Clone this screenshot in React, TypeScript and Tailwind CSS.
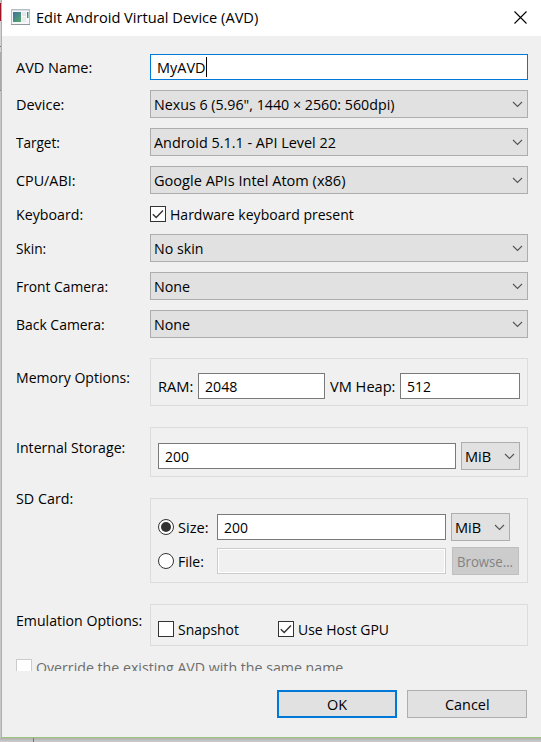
import { useLayoutEffect, useRef, useState, type ReactNode } from "react";
import clsx from "clsx";

/** Single-line caption squeezed or stretched horizontally to a given width. */
function T({ children, w, className }: { children: string; w: number; className?: string }) {
  const ref = useRef<HTMLSpanElement>(null);
  const [scale, setScale] = useState(1);
  useLayoutEffect(() => {
    if (ref.current) setScale((w - 0.8) / ref.current.offsetWidth);
  }, [w, children]);
  return (
    <span className={clsx("block h-5 shrink-0 whitespace-nowrap leading-5", className)} style={{ width: w }}>
      <span ref={ref} className="inline-block origin-left" style={{ transform: `scaleX(${scale})` }}>
        {children}
      </span>
    </span>
  );
}

function Chevron() {
  return (
    <svg width="11" height="7" viewBox="0 0 11 7" className="shrink-0" fill="none" stroke="#555" strokeWidth="1.1">
      <path d="M1 1 L5.5 5.5 L10 1" />
    </svg>
  );
}

function Combo({ text, w, className }: { text: string; w: number; className?: string }) {
  return (
    <div className={clsx("flex h-7 shrink-0 items-center justify-between border border-[#adadad] bg-[#e1e1e1] pr-1 pl-[3px]", className)}>
      <T w={w}>{text}</T>
      <Chevron />
    </div>
  );
}

function Input({ text, w, className }: { text: string; w: number; className?: string }) {
  return (
    <div className={clsx("flex h-[26px] shrink-0 items-center border border-[#7a7a7a] bg-white pl-1.5", className)}>
      <T w={w}>{text}</T>
    </div>
  );
}

function Check({ on, muted }: { on?: boolean; muted?: boolean }) {
  return (
    <span className={clsx("block size-4 shrink-0 border bg-white", muted ? "border-[#cccccc]" : "border-[#333333]")}>
      {on && (
        <svg width="14" height="14" viewBox="0 0 14 14" fill="none" stroke="#333" strokeWidth="1.4">
          <path d="M1.8 7.2 L5.2 10.5 L12 3.6" />
        </svg>
      )}
    </span>
  );
}

function Radio({ on }: { on?: boolean }) {
  return (
    <span className="flex size-4 shrink-0 items-center justify-center rounded-full border border-[#333333] bg-white">
      {on && <span className="block size-2.5 rounded-full bg-[#333333]" />}
    </span>
  );
}

function Row({ label, w, children, className, labelClass }: { label: string; w: number; children: ReactNode; className?: string; labelClass?: string }) {
  return (
    <div className={clsx("flex", className)}>
      <div className={clsx("w-[134px] shrink-0", labelClass)}>
        <T w={w}>{label}</T>
      </div>
      {children}
    </div>
  );
}

const group = "w-[378px] shrink-0 border border-[#dcdcdc]";

export default function App() {
  return (
    <div className="flex h-[742px] w-[541px] flex-col overflow-hidden bg-[#c4c4c4] font-['Open_Sans','Noto_Sans',sans-serif] text-[15px] text-black">
      <div className="flex h-[738px]">
        <div className="flex w-px shrink-0 flex-col bg-[#bdbdbd]">
          <div className="h-[3px] bg-[#c9c9c9]" />
          <div className="h-[18px] bg-[#9c1524]" />
          <div className="h-[25px] bg-[#d2d2d2]" />
          <div className="h-px bg-[#777777]" />
          <div className="h-[5px] bg-[#d0d0d0]" />
          <div className="h-[38px] bg-[#aaaaaa]" />
          <div className="h-px bg-[#888888]" />
          <div className="grow bg-[#c7c7c7]" />
        </div>
        <div className="flex w-[540px] flex-col border-b border-l border-[#9dc47b] bg-[#f0f0f0]">
          <header className="flex h-9 shrink-0 items-center bg-white pr-[14px] pl-[9px]">
            <svg width="19" height="16" viewBox="0 0 19 16" className="mt-[-2px] shrink-0">
              <defs>
                <linearGradient id="screen" x1="0" y1="0" x2="1" y2="1">
                  <stop offset="0" stopColor="#3c6fa5" />
                  <stop offset="1" stopColor="#58aa66" />
                </linearGradient>
              </defs>
              <rect x="0.5" y="0.5" width="18" height="15" fill="#f6f7f8" stroke="#b7bec6" />
              <path d="M1 1.5h17" stroke="#d5dce4" />
              <path d="M0 15.5h19" stroke="#8f989f" />
              <rect x="2" y="3" width="8" height="10" fill="url(#screen)" />
              <rect x="11" y="3" width="4" height="4" fill="#e4e7ea" />
              <rect x="11" y="8" width="4" height="5" fill="#e9ebed" />
              <rect x="16" y="3" width="1.5" height="6" fill="url(#screen)" />
            </svg>
            <T w={223} className="mt-[-2px] ml-[6px]">Edit Android Virtual Device (AVD)</T>
            <svg width="13" height="13" viewBox="0 0 13 13" className="ml-auto mt-[-2px]" stroke="black" strokeWidth="1.1">
              <path d="M0.5 0.5 L12.5 12.5 M12.5 0.5 L0.5 12.5" />
            </svg>
          </header>

          <main className="flex h-[635px] shrink-0 flex-col overflow-hidden pt-[18px] pl-[14px]">
            <Row label="AVD Name:" w={77} className="h-[26px] items-center">
              <div className="flex h-[26px] w-[378px] items-center border border-[#0078d7] bg-white pl-1.5">
                <T w={49}>MyAVD</T>
                <span className="block h-5 w-px bg-black" />
              </div>
            </Row>
            <Row label="Device:" w={49} className="mt-2.5 items-center">
              <Combo className="w-[378px]" w={241} text={'Nexus 6 (5.96", 1440 × 2560: 560dpi)'} />
            </Row>
            <Row label="Target:" w={45} className="mt-2.5 items-center">
              <Combo className="w-[378px]" w={183} text="Android 5.1.1 - API Level 22" />
            </Row>
            <Row label="CPU/ABI:" w={60} className="mt-2.5 items-center">
              <Combo className="w-[378px]" w={192} text="Google APIs Intel Atom (x86)" />
            </Row>
            <Row label="Keyboard:" w={68} className="mt-2.5 h-5 items-center">
              <Check on />
              <T w={185} className="ml-1">Hardware keyboard present</T>
            </Row>
            <Row label="Skin:" w={31} className="mt-2.5 items-center">
              <Combo className="w-[378px]" w={50} text="No skin" />
            </Row>
            <Row label="Front Camera:" w={93} className="mt-2.5 items-center">
              <Combo className="w-[378px]" w={37} text="None" />
            </Row>
            <Row label="Back Camera:" w={90} className="mt-2.5 items-center">
              <Combo className="w-[378px]" w={37} text="None" />
            </Row>

            <Row label="Memory Options:" w={115} className="mt-5" labelClass="pt-[9px]">
              <div className={clsx(group, "flex h-12 items-center pt-[8px] pl-[7px]")}>
                <T w={36}>RAM:</T>
                <Input className="ml-1 w-[127px]" w={33} text="2048" />
                <T w={66} className="ml-[5px]">VM Heap:</T>
                <Input className="ml-1 w-[120px]" w={25} text="512" />
              </div>
            </Row>

            <Row label="Internal Storage:" w={110} className="mt-[21px]" labelClass="pt-2.5">
              <div className={clsx(group, "flex h-[50px] items-center pt-[8px] pl-[7px]")}>
                <Input className="w-[298px]" w={25} text="200" />
                <Combo className="ml-[5px] w-[59px]" w={27} text="MiB" />
              </div>
            </Row>

            <Row label="SD Card:" w={58} className="mt-[11px]">
              <div className={clsx(group, "mt-2.5 flex h-[85px] flex-col gap-1.5 pt-[14px] pl-[7px]")}>
                <div className="flex h-7 items-center">
                  <Radio on />
                  <T w={31} className="ml-1">Size:</T>
                  <Input className="ml-2 w-[229px]" w={25} text="200" />
                  <Combo className="ml-[5px] w-[59px]" w={27} text="MiB" />
                </div>
                <div className="flex h-7 items-center">
                  <Radio />
                  <T w={27} className="ml-1">File:</T>
                  <div className="ml-3 h-[26px] w-[229px] border border-[#cccccc] bg-white p-px">
                    <div className="h-full bg-[#f0f0f0]" />
                  </div>
                  <div className="ml-1.5 flex h-7 w-[67px] items-center justify-center border border-[#bfbfbf] bg-[#cccccc] text-[#838383]">
                    <T w={57}>Browse...</T>
                  </div>
                </div>
              </div>
            </Row>

            <Row label="Emulation Options:" w={127} className="mt-[21px]" labelClass="pt-1.5">
              <div className={clsx(group, "flex h-[42px] items-center pt-[8px] pl-[7px]")}>
                <Check />
                <T w={62} className="ml-1">Snapshot</T>
                <div className="ml-[38px] flex items-center">
                  <Check on />
                  <T w={92} className="ml-1">Use Host GPU</T>
                </div>
              </div>
            </Row>

            <div className="mt-[11px] flex h-5 shrink-0 items-center text-[#6d6d6d]">
              <Check muted />
              <T w={308} className="ml-1">Override the existing AVD with the same name</T>
            </div>
          </main>

          <footer className="flex gap-2.5 pt-[19px] pl-[275px]">
            <div className="flex h-7 w-[120px] items-center justify-center border-2 border-[#0078d7] bg-[#e1e1e1]">
              <T w={21}>OK</T>
            </div>
            <div className="flex h-7 w-[120px] items-center justify-center border border-[#adadad] bg-[#e1e1e1]">
              <T w={45}>Cancel</T>
            </div>
          </footer>
        </div>
      </div>
      <div className="flex h-1 bg-gradient-to-b from-[#b0b0b0] to-[#cecece]">
        <div className="ml-[33px] h-1 w-px bg-[#777777]" />
      </div>
    </div>
  );
}
